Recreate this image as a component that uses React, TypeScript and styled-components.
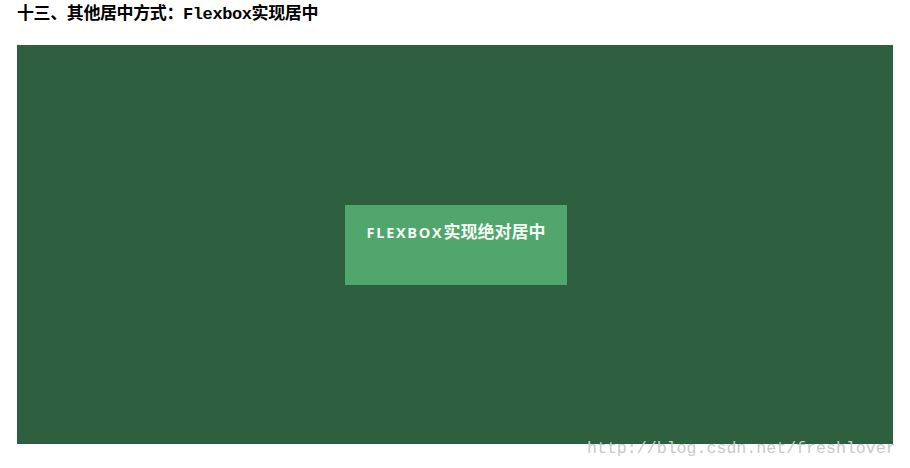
import React from "react";
import styled, { createGlobalStyle } from "styled-components";

const Global = createGlobalStyle`
  html, body { margin: 0; padding: 0; background: #ffffff; }
  body { font-family: "Liberation Serif", "Noto Sans CJK SC", serif; }
`;

const Page = styled.div`
  position: relative;
  width: 910px;
  height: 468px;
  overflow: hidden;
  display: flex;
  flex-direction: column;
`;

const Title = styled.h2`
  margin: 0;
  padding: 4px 17px 0;
  height: 45px;
  box-sizing: border-box;
  font-family: "Liberation Mono", "Noto Sans CJK SC", monospace;
  font-size: 17px;
  line-height: 22px;
  font-weight: 700;
  color: #000;
  letter-spacing: -0.4px;
`;

const Stage = styled.div`
  margin: 0 17px;
  height: 399px;
  background: #2e5f3f;
  display: flex;
  align-items: center;
  justify-content: center;
`;

const Box = styled.div`
  width: 222px;
  height: 80px;
  box-sizing: border-box;
  padding: 15px 0 0 0;
  margin-left: 2px;
  background: #50a66d;
  color: #f6fbf3;
  font-family: "Open Sans", "Noto Sans CJK SC", sans-serif;
  font-weight: 700;
  font-size: 17px;
  line-height: 24px;
  text-align: center;
  white-space: nowrap;
`;

const Latin = styled.span`
  font-size: 14.5px;
  letter-spacing: 1.7px;
`;

const Watermark = styled.div`
  position: absolute;
  left: 587px;
  top: 439px;
  font-family: "Liberation Mono", monospace;
  font-size: 16.6px;
  line-height: 20px;
  color: #c9c9c9;
  white-space: nowrap;
`;

export default function App() {
  return (
    <>
      <Global />
      <Page>
        <Title>十三、其他居中方式：Flexbox实现居中</Title>
        <Stage>
          <Box>
            <Latin>FLEXBOX</Latin>实现绝对居中
          </Box>
        </Stage>
        <Watermark>http://blog.csdn.net/freshlover</Watermark>
      </Page>
    </>
  );
}
